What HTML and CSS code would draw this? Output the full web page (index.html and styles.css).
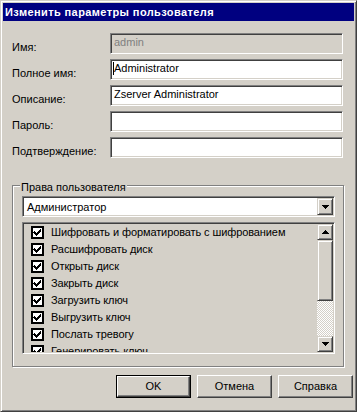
FILE: index.html
```html
<!DOCTYPE html>
<html lang="ru">
<head>
<meta charset="utf-8">
<title>Изменить параметры пользователя</title>
<link rel="stylesheet" href="styles.css">
</head>
<body>
<div class="window">
  <div class="titlebar">Изменить параметры пользователя</div>
  <div class="content">
    <div class="form">
      <div class="label">Имя:</div>
      <div class="field disabled">admin</div>
      <div class="label">Полное имя:</div>
      <div class="field"><span class="caret"></span>Administrator</div>
      <div class="label">Описание:</div>
      <div class="field">Zserver Administrator</div>
      <div class="label">Пароль:</div>
      <div class="field"></div>
      <div class="label">Подтверждение:</div>
      <div class="field"></div>
    </div>

    <div class="group">
      <div class="legend">Права пользователя</div>
      <div class="combo">
        <div class="combo-text">Администратор</div>
        <div class="sbtn combo-btn">
          <svg width="7" height="4" viewBox="0 0 7 4" shape-rendering="crispEdges"><path d="M0 0h7v1h-1v1h-1v1h-1v1h-1v-1h-1v-1h-1v-1h-1z" fill="#000"/></svg>
        </div>
      </div>
      <div class="list">
        <div class="items">
          <div class="item"><span class="check"></span><span>Шифровать и форматировать с шифрованием</span></div>
          <div class="item"><span class="check"></span><span>Расшифровать диск</span></div>
          <div class="item"><span class="check"></span><span>Открыть диск</span></div>
          <div class="item"><span class="check"></span><span>Закрыть диск</span></div>
          <div class="item"><span class="check"></span><span>Загрузить ключ</span></div>
          <div class="item"><span class="check"></span><span>Выгрузить ключ</span></div>
          <div class="item"><span class="check"></span><span>Послать тревогу</span></div>
          <div class="item"><span class="check"></span><span>Генерировать ключ</span></div>
        </div>
        <div class="scrollbar">
          <div class="sbtn arrow-btn">
            <svg width="7" height="4" viewBox="0 0 7 4" shape-rendering="crispEdges"><path d="M3 0h1v1h1v1h1v1h1v1h-7v-1h1v-1h1v-1h1z" fill="#000"/></svg>
          </div>
          <div class="sbtn thumb"></div>
          <div class="track"></div>
          <div class="sbtn arrow-btn">
            <svg width="7" height="4" viewBox="0 0 7 4" shape-rendering="crispEdges"><path d="M0 0h7v1h-1v1h-1v1h-1v1h-1v-1h-1v-1h-1v-1h-1z" fill="#000"/></svg>
          </div>
        </div>
      </div>
    </div>

    <div class="buttons">
      <div class="btn default"><div class="btn-in">OK</div></div>
      <div class="btn"><div class="btn-in">Отмена</div></div>
      <div class="btn"><div class="btn-in">Справка</div></div>
    </div>
  </div>
</div>
</body>
</html>
```

FILE: styles.css
```css
* { box-sizing: border-box; }
html, body { margin: 0; padding: 0; }
body {
  background: #d4d0c8;
  font-family: "Liberation Sans", Arial, sans-serif;
  font-size: 11px;
  color: #000;
}
.window {
  width: 357px;
  height: 412px;
  background: #d4d0c8;
  border: 1px solid;
  border-color: #d4d0c8 #404040 #404040 #d4d0c8;
  box-shadow: inset 1px 1px #fff, inset -1px -1px #808080;
  padding: 2px;
  display: flex;
  flex-direction: column;
}
.titlebar {
  height: 18px;
  background: #000080;
  color: #fff;
  font-weight: bold;
  font-size: 11px;
  letter-spacing: 0.4px;
  line-height: 18px;
  padding-left: 2px;
  white-space: nowrap;
}
.content {
  padding: 12px 0 0 9px;
  display: flex;
  flex-direction: column;
}
.form {
  display: grid;
  grid-template-columns: 98px 233px;
  grid-auto-rows: 21px;
  row-gap: 5px;
}
.label {
  line-height: 13px;
  padding-top: 8px;
  white-space: nowrap;
}
.field {
  height: 21px;
  background: #fff;
  border: 1px solid;
  border-color: #808080 #fff #fff #808080;
  box-shadow: inset 1px 1px #404040, inset -1px -1px #d4d0c8;
  padding: 2px 3px 0 3px;
  line-height: 13px;
  white-space: nowrap;
  display: flex;
}
.field.disabled {
  background: #d4d0c8;
  color: #808080;
}
.caret {
  width: 1px;
  height: 13px;
  background: #000;
  margin-left: -1px;
}
.group {
  margin-top: 27px;
  width: 332px;
  height: 182px;
  border: 1px solid #808080;
  box-shadow: inset 1px 1px #fff, 1px 1px #fff;
  padding: 0 7px 0 9px;
  display: flex;
  flex-direction: column;
}
.legend {
  align-self: flex-start;
  margin: -5px 0 0 -2px;
  padding: 0 1px;
  background: #d4d0c8;
  line-height: 13px;
  white-space: nowrap;
}
.combo {
  margin-top: 2px;
  height: 21px;
  width: 313px;
  background: #fff;
  border: 1px solid;
  border-color: #808080 #fff #fff #808080;
  box-shadow: inset 1px 1px #404040, inset -1px -1px #d4d0c8;
  padding: 1px;
  display: flex;
}
.combo-text {
  flex: 1;
  padding: 3px 0 0 3px;
  line-height: 13px;
}
.sbtn {
  background: #d4d0c8;
  border: 1px solid;
  border-color: #d4d0c8 #404040 #404040 #d4d0c8;
  box-shadow: inset 1px 1px #fff, inset -1px -1px #808080;
}
.combo-btn, .arrow-btn {
  width: 16px;
  display: flex;
  align-items: center;
  justify-content: center;
}
.combo-btn { height: 17px; }
.combo-btn svg, .arrow-btn svg { display: block; }
.list {
  margin-top: 5px;
  width: 313px;
  height: 132px;
  background: #d4d0c8;
  border: 1px solid;
  border-color: #808080 #fff #fff #808080;
  box-shadow: inset 1px 1px #404040, inset -1px -1px #d4d0c8;
  padding: 1px;
  display: flex;
}
.items {
  flex: 1;
  overflow: hidden;
  padding-left: 7px;
}
.item {
  height: 17px;
  display: flex;
  align-items: center;
  gap: 7px;
  white-space: nowrap;
  line-height: 13px;
  letter-spacing: -0.1px;
}
.check {
  flex: none;
  width: 13px;
  height: 13px;
  border: 2px solid #000;
  background-color: #fff;
  background-image: url("data:image/svg+xml;utf8,<svg xmlns='http://www.w3.org/2000/svg' width='9' height='9' viewBox='0 0 9 9' shape-rendering='crispEdges'><path d='M1 3h1v1h1v1h1v-1h1v-1h1v-1h1v-1h1v3h-1v1h-1v1h-1v1h-1v1h-1v-1h-1v-1h-1v-1h-1z' fill='black'/></svg>");
  background-repeat: no-repeat;
  background-position: 0 0;
}
.scrollbar {
  width: 16px;
  display: flex;
  flex-direction: column;
}
.arrow-btn { height: 16px; }
.thumb { height: 61px; }
.track {
  flex: 1;
  background-color: #d4d0c8;
  background-image: conic-gradient(#fff 25%, #d4d0c8 0 50%, #fff 0 75%, #d4d0c8 0);
  background-size: 2px 2px;
}
.buttons {
  margin-top: 8px;
  display: flex;
  justify-content: flex-end;
  gap: 6px;
  padding-right: 1px;
}
.btn {
  width: 75px;
  height: 23px;
  display: flex;
}
.btn-in {
  flex: 1;
  background: #d4d0c8;
  border: 1px solid;
  border-color: #fff #404040 #404040 #fff;
  box-shadow: inset -1px -1px #808080;
  display: flex;
  align-items: center;
  justify-content: center;
  line-height: 13px;
}
.btn.default {
  border: 1px solid #000;
}
```
